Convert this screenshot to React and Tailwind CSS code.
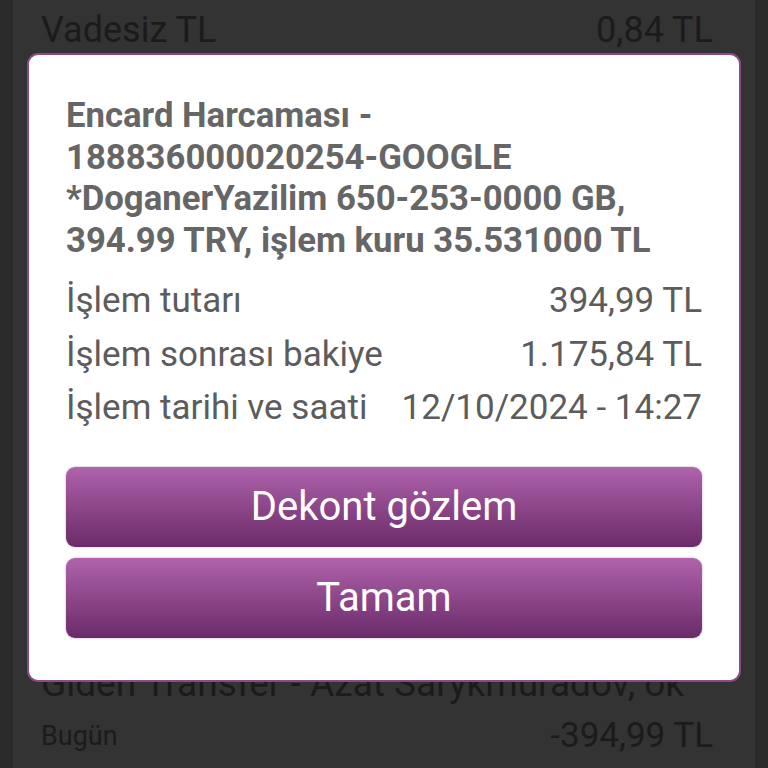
import React from 'react';

const rows = [
  { label: 'İşlem tutarı', value: '394,99 TL' },
  { label: 'İşlem sonrası bakiye', value: '1.175,84 TL' },
  { label: 'İşlem tarihi ve saati', value: '12/10/2024 - 14:27' },
];

const font = { fontFamily: 'Roboto, "Noto Sans", sans-serif' };

const PurpleButton = ({ children }) => (
  <button className="h-[80px] w-full rounded-[9px] bg-gradient-to-b from-[#af63ab] to-[#6b2b69] text-[40px] text-white shadow-[0_0_2px_rgba(120,40,120,0.5)]">
    {children}
  </button>
);

export default function App() {
  return (
    <div className="relative h-[768px] w-[768px] overflow-hidden bg-[#2a2a2a]" style={font}>
      {/* dimmed list behind the dialog */}
      <div className="mx-[13px] flex h-full flex-col bg-[#333333] pl-[28px] pr-[42px] text-[#1b1b1b]">
        <div className="flex items-center justify-between pt-[6px] text-[36px] leading-[48px]">
          <span>Vadesiz TL</span>
          <span>0,84 TL</span>
        </div>
        <div className="mt-auto whitespace-nowrap text-[37px] leading-[44px]">
          Giden Transfer - Azat Sarykmuradov, ok
        </div>
        <div className="flex items-center justify-between pb-[6px] pt-[4px]">
          <span className="text-[27px]">Bugün</span>
          <span className="text-[35px]">-394,99 TL</span>
        </div>
      </div>

      {/* dialog */}
      <div className="absolute left-[27px] top-[53px] flex h-[629px] w-[714px] flex-col rounded-[11px] border-2 border-[#8a4a87] bg-white px-[37px] pt-[40px]">
        <h2 className="whitespace-nowrap text-[34.7px] font-bold leading-[41.5px] text-[#666666]">
          Encard Harcaması -<br />
          188836000020254-GOOGLE<br />
          *DoganerYazilim 650-253-0000 GB,<br />
          394.99 TRY, işlem kuru 35.531000 TL
        </h2>
        <div className="mt-[13px] flex flex-col text-[35px] leading-[53.5px] text-[#5c5c5c]">
          {rows.map((r) => (
            <div key={r.label} className="flex justify-between whitespace-nowrap">
              <span>{r.label}</span>
              <span>{r.value}</span>
            </div>
          ))}
        </div>
        <div className="mt-[32px] flex flex-col gap-[11px]">
          <PurpleButton>Dekont gözlem</PurpleButton>
          <PurpleButton>Tamam</PurpleButton>
        </div>
      </div>
    </div>
  );
}
